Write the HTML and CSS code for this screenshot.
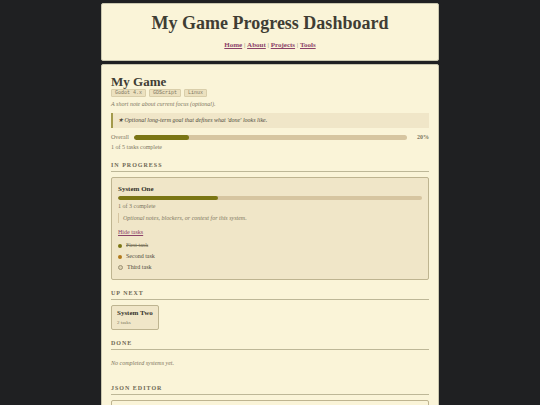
FILE: index.html
```html
<!DOCTYPE html>
<html lang="en">
<head>
<meta charset="utf-8">
<meta name="viewport" content="width=device-width, initial-scale=1">
<title>My Game Progress Dashboard</title>
<link rel="stylesheet" href="styles.css">
</head>
<body>
<header class="panel site-header">
  <h1>My Game Progress Dashboard</h1>
  <nav><a href="#">Home</a> | <a href="#">About</a> | <a href="#">Projects</a> | <a href="#">Tools</a></nav>
</header>
<main class="panel content">
  <h2>My Game</h2>
  <ul class="tags"><li>Godot 4.x</li><li>GDScript</li><li>Linux</li></ul>
  <p class="note">A short note about current focus (optional).</p>
  <p class="goal">★ Optional long-term goal that defines what 'done' looks like.</p>
  <div class="overall">
    <span>Overall</span>
    <div class="bar"><div class="fill" style="width:20%"></div></div>
    <span class="percent">20%</span>
  </div>
  <p class="count">1 of 5 tasks complete</p>

  <h3>In Progress</h3>
  <section class="card system">
    <h4>System One</h4>
    <div class="bar thin"><div class="fill" style="width:33%"></div></div>
    <p class="count">1 of 3 complete</p>
    <p class="context">Optional notes, blockers, or context for this system.</p>
    <button type="button" class="toggle">Hide tasks</button>
    <ul class="tasks">
      <li class="done">First task</li>
      <li class="active">Second task</li>
      <li class="todo">Third task</li>
    </ul>
  </section>

  <h3>Up Next</h3>
  <section class="card next">
    <h4>System Two</h4>
    <p>2 tasks</p>
  </section>

  <h3>Done</h3>
  <p class="empty">No completed systems yet.</p>

  <h3><label for="json">JSON Editor</label></h3>
  <textarea id="json" class="editor"></textarea>
</main>
</body>
</html>
```

FILE: styles.css
```css
*, *::before { box-sizing: border-box; }
html { background: #1f2022; scrollbar-width: none; }
body {
  max-width: 338px;
  margin: 3px auto;
  font: 6px/10px "Liberation Serif", serif;
  color: #7d765f;
}
h1, h2, h3, h4, p, ul { margin: 0; padding: 0; }
ul { list-style: none; }
.panel {
  background: #faf4d8;
  border: 1px solid #c9c6ae;
  border-radius: 2px;
}
.site-header {
  padding: 9px 10px 10px;
  margin-bottom: 3px;
  text-align: center;
}
h1 { font-size: 18px; line-height: 20px; color: #3f3d34; }
nav { margin-top: 7px; font-size: 7px; }
nav a { font-weight: bold; color: #8b4268; }
.content { padding: 9px; }
h2 { font-size: 13px; line-height: 15px; color: #3f3d34; }
.tags { display: flex; gap: 3px; }
.tags li {
  height: 8px;
  padding: 0 3px;
  border: 1px solid #d9ceaa;
  border-radius: 1px;
  background: #ece1bf;
  font: 5px/6px "Liberation Mono", monospace;
}
.note { margin-top: 2px; font-style: italic; }
.goal {
  margin: 4px 0;
  padding: 2px 5px 3px;
  border-left: 2px solid #a39a4c;
  background: #f0e6c8;
  font-style: italic;
  color: #4f4b3c;
}
.overall { display: flex; align-items: center; gap: 5px; }
.percent { width: 17px; text-align: right; font-weight: bold; }
.bar {
  flex: 1;
  height: 5px;
  border-radius: 3px;
  background: #d6c5a0;
  overflow: hidden;
}
.fill { height: 100%; border-radius: 3px; background: #7b7614; }
.thin { height: 4px; margin: 2px 0 1px; }
h3 {
  margin: 8px 0 5px;
  padding-bottom: 1px;
  border-bottom: 1px solid #bdb797;
  font-size: 6px;
  line-height: 10px;
  letter-spacing: 1px;
  text-transform: uppercase;
  color: #6d6754;
}
.card {
  border: 1px solid #beb490;
  border-radius: 2px;
  background: #f0e6c8;
}
.card h4 { font-size: 7px; line-height: 10px; color: #35332b; }
.system { padding: 6px; }
.context {
  margin: 2px 0 4px;
  padding-left: 4px;
  border-left: 1px solid #d6c5a0;
  font-style: italic;
}
.toggle {
  display: block;
  padding: 0;
  border: 0;
  background: none;
  font: inherit;
  color: #8b4268;
  text-decoration: underline;
}
.tasks { margin-top: 3px; color: #4f4b3c; }
.tasks li { display: flex; align-items: center; gap: 4px; line-height: 11px; }
.tasks li::before {
  content: "";
  width: 4px;
  height: 4px;
  border-radius: 50%;
  background: #7b7614;
}
.tasks .done { color: #7d765f; text-decoration: line-through; }
.tasks .active::before { background: #b27a1c; }
.tasks .todo::before { width: 5px; height: 5px; border: 1px solid #9b9276; background: #ddd2b0; }
.next { width: fit-content; padding: 2px 5px; }
.next p { font-size: 5px; line-height: 9px; }
.empty { margin: 8px 0 15px; font-style: italic; }
.editor {
  display: block;
  width: 100%;
  height: 120px;
  border: 1px solid #beb490;
  border-radius: 2px;
  background: #faf4d8;
}
```
